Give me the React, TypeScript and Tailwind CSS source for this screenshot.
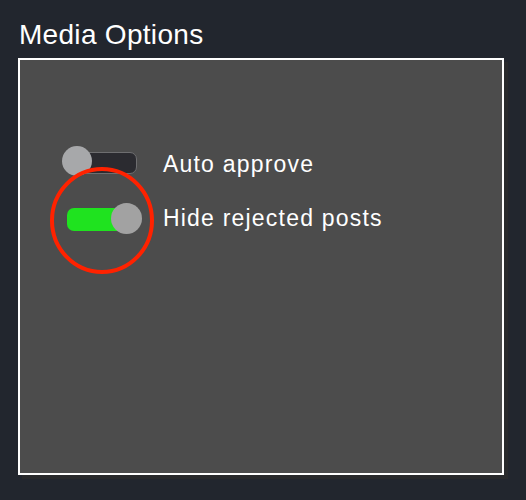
import React from "react";

function Toggle({ on }: { on: boolean }) {
  return (
    <div className="relative w-[80px] h-[31px] shrink-0">
      {on ? (
        <div className="absolute left-[5px] right-[5px] top-[5px] h-[23px] rounded-[7px] bg-[#1fe31f]" />
      ) : (
        <div className="absolute left-[5px] right-[5px] top-[6px] h-[22px] rounded-[7px] bg-[#2b2b30] border border-[#6e6e70]" />
      )}
      <div
        className={
          on
            ? "absolute right-0 top-0 w-[31px] h-[31px] rounded-full bg-[#a2a2a2]"
            : "absolute left-0 top-0 w-[30px] h-[30px] rounded-full bg-[#a7a8aa]"
        }
      />
    </div>
  );
}

export default function App() {
  return (
    <div
      className="w-[526px] h-[500px] bg-[#22262e] text-white overflow-hidden"
      style={{ fontFamily: '"Liberation Sans", Arial, sans-serif' }}
    >
      <div className="pl-[19px] pt-[21px] text-[28px] leading-[28px] tracking-[0.3px] mb-[9px]">
        Media Options
      </div>
      <div className="relative ml-[18px] w-[486px] h-[417px] border-2 border-white bg-[#4c4c4c] shadow-[4px_4px_0_#292a2c]">
        <div className="flex flex-col gap-[26px] pl-[42px] pt-[86px]">
          <div className="flex items-center gap-[21px]">
            <Toggle on={false} />
            <span className="text-[23px] leading-[23px] tracking-[1.2px] mt-[6px]">Auto approve</span>
          </div>
          <div className="flex items-center gap-[21px]">
            <Toggle on={true} />
            <span className="text-[23px] leading-[23px] tracking-[1.2px]">Hide rejected posts</span>
          </div>
        </div>
        <svg
          className="absolute left-[28px] top-[105px]"
          width="108"
          height="111"
          viewBox="0 0 108 111"
        >
          <ellipse cx="54" cy="55.5" rx="50" ry="51.5" fill="none" stroke="#ff2200" strokeWidth="4" />
        </svg>
      </div>
    </div>
  );
}
